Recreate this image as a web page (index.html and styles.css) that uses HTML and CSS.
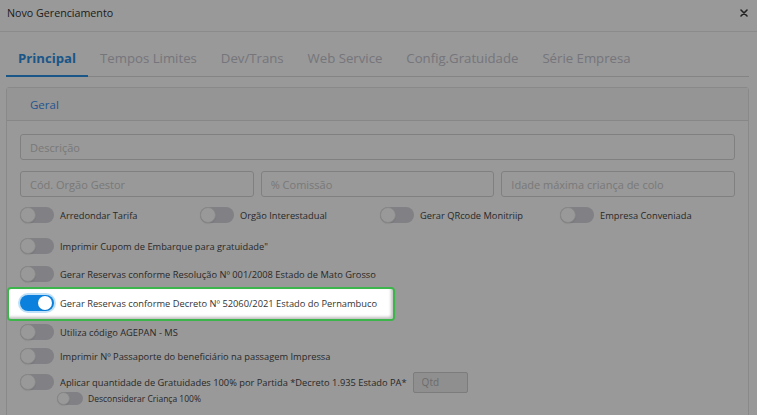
FILE: index.html
```html
<!DOCTYPE html>
<html lang="pt">
<head>
<meta charset="utf-8">
<title>Novo Gerenciamento</title>
<link rel="stylesheet" href="styles.css">
</head>
<body>
<div class="modal">
  <div class="modal-header">
    <span class="title">Novo Gerenciamento</span>
    <span class="close"><svg width="8" height="8" viewBox="0 0 8 8"><path d="M1 1L7 7M7 1L1 7" stroke="#3a3a3a" stroke-width="1.6" stroke-linecap="round"/></svg></span>
  </div>
  <div class="modal-body">
    <div class="tabs">
      <span class="tab active">Principal</span>
      <span class="tab">Tempos Limites</span>
      <span class="tab">Dev/Trans</span>
      <span class="tab">Web Service</span>
      <span class="tab">Config.Gratuidade</span>
      <span class="tab">Série Empresa</span>
    </div>
    <div class="panel">
      <div class="panel-heading">Geral</div>
      <div class="panel-body">
        <input class="field" placeholder="Descrição">
        <div class="field-row">
          <input class="field" placeholder="Cód. Orgão Gestor">
          <input class="field" placeholder="% Comissão">
          <input class="field" placeholder="Idade máxima criança de colo">
        </div>
        <div class="switch-grid">
          <div class="switch-item"><span class="switch"><span class="knob"></span></span><span class="label">Arredondar Tarifa</span></div>
          <div class="switch-item"><span class="switch"><span class="knob"></span></span><span class="label">Orgão Interestadual</span></div>
          <div class="switch-item"><span class="switch"><span class="knob"></span></span><span class="label">Gerar QRcode Monitriip</span></div>
          <div class="switch-item"><span class="switch"><span class="knob"></span></span><span class="label">Empresa Conveniada</span></div>
        </div>
        <div class="switch-item row r2"><span class="switch"><span class="knob"></span></span><span class="label">Imprimir Cupom de Embarque para gratuidade"</span></div>
        <div class="switch-item row r3"><span class="switch"><span class="knob"></span></span><span class="label">Gerar Reservas conforme Resolução Nº 001/2008 Estado de Mato Grosso</span></div>
        <div class="switch-item row r4 highlight"><span class="switch on"><span class="knob"></span></span><span class="label">Gerar Reservas conforme Decreto Nº 52060/2021 Estado do Pernambuco</span></div>
        <div class="switch-item row r5"><span class="switch"><span class="knob"></span></span><span class="label">Utiliza código AGEPAN - MS</span></div>
        <div class="switch-item row r6"><span class="switch"><span class="knob"></span></span><span class="label">Imprimir Nº Passaporte do beneficiário na passagem Impressa</span></div>
        <div class="switch-item row r7"><span class="switch"><span class="knob"></span></span><span class="label">Aplicar quantidade de Gratuidades 100% por Partida *Decreto 1.935 Estado PA*</span><input class="qtd" placeholder="Qtd"></div>
        <div class="switch-item sub"><span class="switch small"><span class="knob"></span></span><span class="label">Desconsiderar Criança 100%</span></div>
      </div>
    </div>
  </div>
</div>
<div class="overlay"></div>
</body>
</html>
```

FILE: styles.css
```css
* { box-sizing: border-box; }
html, body { margin: 0; padding: 0; }
body {
  width: 757px;
  height: 415px;
  overflow: hidden;
  background: #fff;
  font-family: "Open Sans", "Liberation Sans", sans-serif;
  color: #333;
}
.modal {
  background: #fff;
}
.modal-header {
  height: 32px;
  border-bottom: 1px solid #e8e8e8;
  display: flex;
  align-items: center;
  justify-content: space-between;
  padding: 0 9px 0 7px;
}
.title {
  font-size: 10.7px;
  color: #333;
  margin-top: -6px;
}
.close {
  display: flex;
  margin-top: -6px;
}
.modal-body {
  padding: 0 8px 0 6px;
}
.tabs {
  display: flex;
  height: 45px;
  align-items: flex-end;
  border-bottom: 1px solid #dcdcdc;
}
.tab {
  font-size: 13.2px;
  color: #c4c4ce;
  padding: 0 12px 7px;
  border-bottom: 2px solid transparent;
  margin-bottom: -1px;
  line-height: 20px;
}
.tab.active {
  font-weight: 700;
  color: #2e90e4;
  border-bottom-color: #2e90e4;
}
.panel {
  margin-top: 10px;
  border: 1px solid #e4e4e4;
  border-radius: 3px;
}
.panel-heading {
  height: 33px;
  background: #f8f8f8;
  border-bottom: 1px solid #e2e2e2;
  padding-left: 23px;
  display: flex;
  align-items: center;
  font-size: 11.5px;
  color: #3a8ff0;
}
.panel-body {
  padding: 13px 13px 20px 13px;
}
.field {
  display: block;
  width: 100%;
  height: 26px;
  border: 1px solid #d6d6d6;
  border-radius: 3px;
  padding: 0 9px;
  font-family: "Open Sans", "Liberation Sans", sans-serif;
  font-size: 11px;
  color: #555;
  background: #fff;
  outline: none;
}
.field::placeholder { color: #cacaca; }
.field-row {
  display: grid;
  grid-template-columns: 1fr 1fr 1fr;
  gap: 7px;
  margin-top: 11px;
}
.switch-grid {
  display: grid;
  grid-template-columns: repeat(4, 180px);
  margin-top: 10px;
}
.switch-item {
  display: flex;
  align-items: center;
  height: 16px;
}
.label {
  font-size: 9.3px;
  color: #454545;
  margin-left: 6px;
  white-space: nowrap;
}
.switch {
  width: 34px;
  height: 16px;
  border-radius: 8px;
  background: #d5d5de;
  display: flex;
  align-items: center;
  flex-shrink: 0;
}
.knob {
  width: 16px;
  height: 16px;
  border-radius: 50%;
  background: #fff;
  border: 1px solid #e2e2e2;
  box-shadow: 0 1px 1px rgba(0,0,0,0.08);
}
.switch.on {
  background: #0b80dc;
  justify-content: flex-end;
  padding-right: 2px;
  box-shadow: 0 0 0 2px #bfe0f7;
}
.switch.on .knob {
  width: 14px;
  height: 14px;
  border: none;
}
.switch.small {
  width: 26px;
  height: 13px;
}
.switch.small .knob {
  width: 13px;
  height: 13px;
}
.r2 { margin-top: 15px; }
.r3 { margin-top: 12px; }
.r4 { margin-top: 13px; }
.r5 { margin-top: 13px; }
.r6 { margin-top: 8px; }
.r7 { margin-top: 10px; }
.sub {
  margin-top: 2px;
  margin-left: 37px;
  height: 13px;
}
.sub .label { margin-left: 5px; font-size: 8.5px; }
.qtd {
  width: 55px;
  height: 21px;
  margin-left: 6px;
  border: 1px solid #cfcfcf;
  border-radius: 2px;
  background: #eeeeee;
  padding: 0 8px;
  font-family: "Open Sans", "Liberation Sans", sans-serif;
  font-size: 10px;
  outline: none;
}
.qtd::placeholder { color: #b5b5b5; }
.overlay {
  position: fixed;
  inset: 0;
  background: rgba(0, 0, 0, 0.4);
  z-index: 1000;
}
.highlight {
  position: relative;
  z-index: 1001;
  width: fit-content;
}
.highlight .label { color: #333; }
.highlight::before {
  content: "";
  position: absolute;
  left: -13px;
  right: -18px;
  top: -8px;
  bottom: -10px;
  background: #fff;
  border: 2px solid #3cb54a;
  border-radius: 4px;
  box-shadow: inset -2px -2px 3px rgba(0,0,0,0.25);
  z-index: -1;
}
```
